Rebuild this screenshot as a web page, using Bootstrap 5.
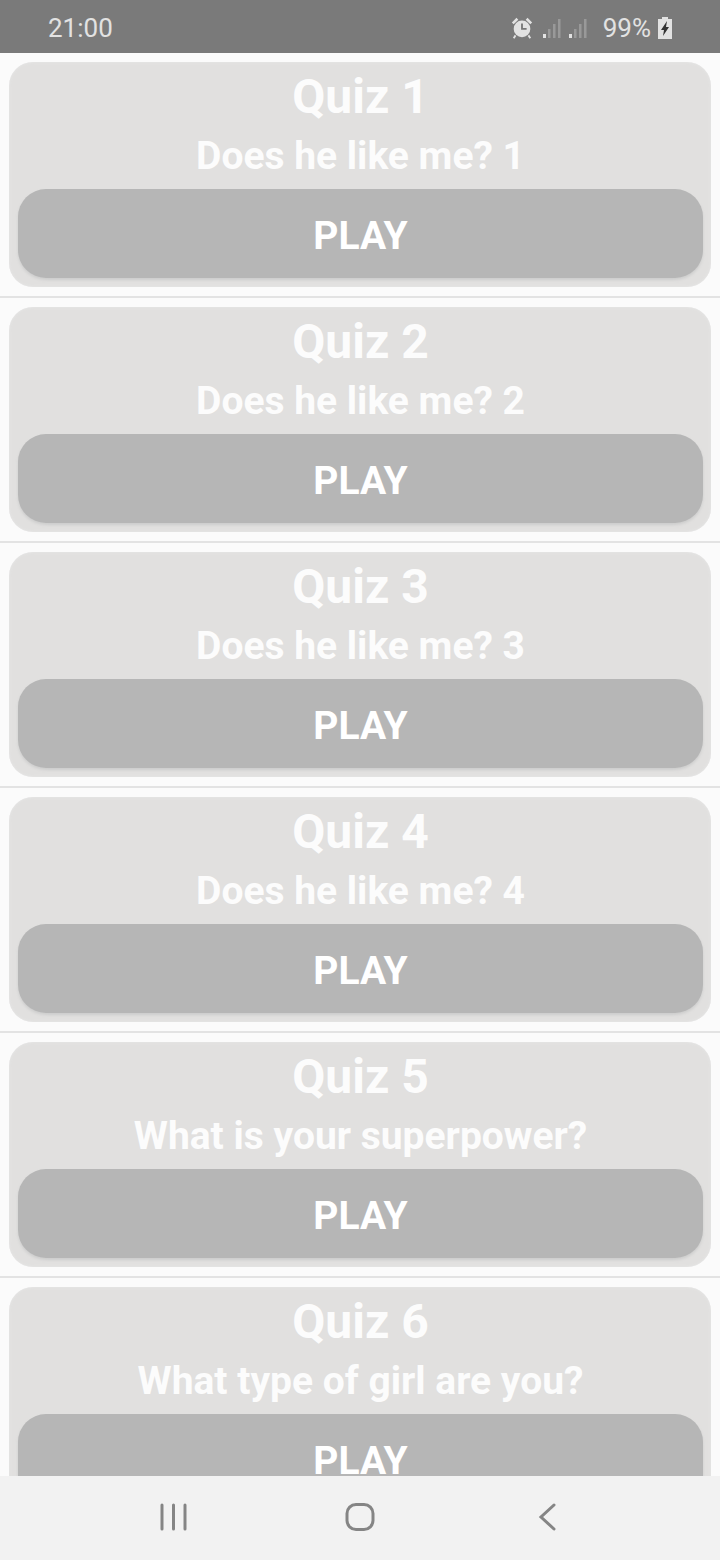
<!DOCTYPE html>
<html lang="en">
<head>
<meta charset="utf-8">
<title>Quiz list</title>
<link rel="stylesheet" href="https://cdn.jsdelivr.net/npm/bootstrap@5.3.0/dist/css/bootstrap.min.css">
<style>
html,body{height:1560px;overflow:hidden}
body{background:#fbfbfb;font-family:Roboto,"Liberation Sans",sans-serif}
.app-shell{width:720px;height:1560px}
.status-strip{height:53px;background:#7a7a7a;color:#e2e2e2;font-size:26px;padding:3px 48px 0;flex:none}
.pct{font-size:26px;margin:0 7px 0 15px}
.sig-gap{margin-left:6px}
.alarm-gap{margin-left:8px}
.quiz-scroll{flex:1 1 auto;overflow:hidden;min-height:0}
.quiz-row{height:245px;padding:9px 9px 0;border-bottom:2px solid #e3e3e3;flex:none}
.quiz-box{height:225px;background:#e1e0df;border-radius:24px;padding:2px 8px 9px 9px;box-shadow:inset 0 0 3px #e8e8e8;text-align:center;color:#fcfcfc;font-weight:700}
.quiz-title{font-size:48px;line-height:66px;margin:0;font-weight:700}
.quiz-sub{font-size:39px;line-height:52px;margin:0;font-weight:700}
.play-btn{height:89px;margin-top:7px;border-radius:28px;background:#b6b6b6;border:0;color:#fff;font-size:39px;font-weight:700;box-shadow:0 2px 3px #cdcdcd;width:100%;display:flex;align-items:center;justify-content:center;padding:5px 0 0}
.nav-strip{height:84px;background:#f2f2f2;flex:none;padding:0 0 2px 159.500px}
.nav-home{margin-left:157px}
.nav-back{margin-left:163px}
</style>
</head>
<body>
<div class="app-shell d-flex flex-column">
  <div class="status-strip d-flex align-items-center justify-content-between">
    <span>21:00</span>
    <div class="d-flex align-items-center">
      <svg width="24" height="24" viewBox="0 0 26 26"><circle cx="13" cy="14" r="9" fill="#e2e2e2"/><path d="M2 7 7 2l2 2-5 5zM24 7l-5-5-2 2 5 5z" fill="#e2e2e2"/><path d="M6 21l-2 3M20 21l2 3" stroke="#e2e2e2" stroke-width="2"/><path d="M13 8v6h5" fill="none" stroke="#777" stroke-width="2"/></svg>
      <svg class="alarm-gap" width="20" height="22" viewBox="0 0 20 22"><rect x="1" y="17" width="3" height="4" fill="#e2e2e2"/><rect x="6" y="12" width="2.500" height="9" fill="#999"/><rect x="11" y="7" width="2.500" height="14" fill="#999"/><rect x="16" y="2" width="2.500" height="19" fill="#999"/></svg>
      <svg class="sig-gap" width="20" height="22" viewBox="0 0 20 22"><rect x="1" y="17" width="3" height="4" fill="#e2e2e2"/><rect x="6" y="12" width="2.500" height="9" fill="#999"/><rect x="11" y="7" width="2.500" height="14" fill="#999"/><rect x="16" y="2" width="2.500" height="19" fill="#999"/></svg>
      <span class="pct">99%</span>
      <svg width="14" height="22" viewBox="0 0 14 22"><path d="M4 0h6v2h4v20H0V2h4z" fill="#e2e2e2"/><path d="M9 4 3 13h3l-1 6 6-9H8z" fill="#333"/></svg>
    </div>
  </div>
  <div class="quiz-scroll d-flex flex-column">
    <div class="quiz-row"><div class="quiz-box"><p class="quiz-title">Quiz 1</p><p class="quiz-sub">Does he like me? 1</p><button type="button" class="btn play-btn">PLAY</button></div></div>
    <div class="quiz-row"><div class="quiz-box"><p class="quiz-title">Quiz 2</p><p class="quiz-sub">Does he like me? 2</p><button type="button" class="btn play-btn">PLAY</button></div></div>
    <div class="quiz-row"><div class="quiz-box"><p class="quiz-title">Quiz 3</p><p class="quiz-sub">Does he like me? 3</p><button type="button" class="btn play-btn">PLAY</button></div></div>
    <div class="quiz-row"><div class="quiz-box"><p class="quiz-title">Quiz 4</p><p class="quiz-sub">Does he like me? 4</p><button type="button" class="btn play-btn">PLAY</button></div></div>
    <div class="quiz-row"><div class="quiz-box"><p class="quiz-title">Quiz 5</p><p class="quiz-sub">What is your superpower?</p><button type="button" class="btn play-btn">PLAY</button></div></div>
    <div class="quiz-row"><div class="quiz-box"><p class="quiz-title">Quiz 6</p><p class="quiz-sub">What type of girl are you?</p><button type="button" class="btn play-btn">PLAY</button></div></div>
  </div>
  <div class="nav-strip d-flex align-items-center">
    <svg width="28" height="28" viewBox="0 0 28 28"><path d="M2 2v24M13.500 2v24M25 2v24" stroke="#858585" stroke-width="3" stroke-linecap="round"/></svg>
    <svg class="nav-home" width="30" height="30" viewBox="0 0 30 30"><rect x="2" y="2.500" width="26" height="25" rx="9" fill="none" stroke="#858585" stroke-width="3"/></svg>
    <svg class="nav-back" width="20" height="30" viewBox="0 0 20 30"><path d="M16 3 3 15l13 12" fill="none" stroke="#858585" stroke-width="3" stroke-linecap="round"/></svg>
  </div>
</div>
</body>
</html>
